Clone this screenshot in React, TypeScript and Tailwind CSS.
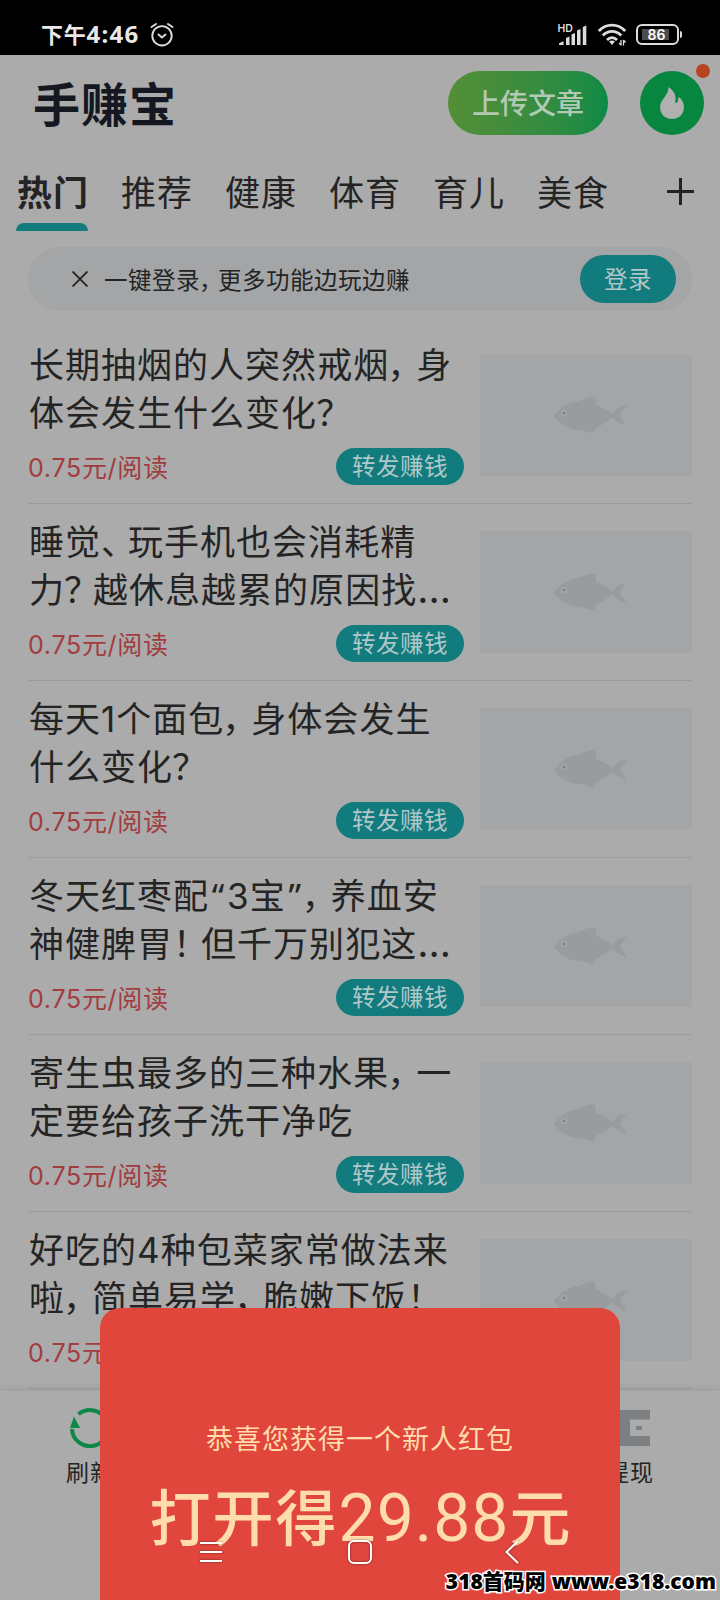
import React from 'react';

const TABS = ['热门', '推荐', '健康', '体育', '育儿', '美食'];

const ARTICLES: string[][] = [
  ['长期抽烟的人突然戒烟，身', '体会发生什么变化？'],
  ['睡觉、玩手机也会消耗精', '力？越休息越累的原因找…'],
  ['每天1个面包，身体会发生', '什么变化？'],
  ['冬天红枣配“3宝”，养血安', '神健脾胃！但千万别犯这…'],
  ['寄生虫最多的三种水果，一', '定要给孩子洗干净吃'],
  ['好吃的4种包菜家常做法来', '啦，简单易学，脆嫩下饭！'],
];

// Punctuation is set narrower than a full em
const PUNCTUATION: Record<string, string> = {
  '，': "inline-block w-[27px] -indent-[2px] [font-feature-settings:'halt']",
  '、': "inline-block w-[27px] [font-feature-settings:'halt']",
  '？': "inline-block w-[28px] -indent-px [font-feature-settings:'halt']",
  '！': "inline-block w-[28px] [font-feature-settings:'halt']",
  '“': "inline-block w-[18px] text-center font-['Noto_Sans'] tracking-normal",
  '”': "inline-block w-[18px] text-center font-['Noto_Sans'] tracking-normal",
  '…': "inline-block w-[36px] text-[39px] leading-none font-['Inter'] tracking-normal",
};

const TitleLine: React.FC<{ text: string }> = ({ text }) => (
  <span className="block h-12 whitespace-nowrap">
    {Array.from(text).map((ch, i) =>
      PUNCTUATION[ch] ? <span key={i} className={PUNCTUATION[ch]}>{ch}</span> : ch
    )}
  </span>
);

const FishIcon: React.FC = () => (
  <svg className="w-[74px] h-[38px]" viewBox="0 0 74 38" fill="#999b9d">
    <path d="M0 20C6 11 15 6 25 5C30 3 35 0 39 0.500C42 1 42 5 42 9C49 11 54 15 58 18.500C61 14 65 10 73 10C69 14 67 17 66 20C68 23 71 27 72 30C66 28 61 25 58 21.500C53 26 48 29 42 32C41 35 40 38 37 37C33 36 30 34 24 34C13 33 5 27 0 20Z" />
    <rect x="8" y="15" width="4" height="4" fill="#808285" stroke="#b0b1b3" strokeWidth="1" />
  </svg>
);

const StatusBar: React.FC = () => (
  <div className="h-[55px] shrink-0 bg-black text-[#e8e8e8] flex items-center pl-[41px] pr-[38px] pt-[14px]">
    <span className="text-[22px] leading-none font-bold tracking-[0.700px] w-[100px] whitespace-nowrap pb-[2px]">下午<span className="font-['Noto_Sans'] text-[24px] tracking-[1.300px]">4:46</span></span>
    <svg className="w-6 h-6 ml-[9px] mt-px" viewBox="0 0 24 24" fill="none" stroke="#dcdcdc" strokeWidth="1.900" strokeLinecap="round">
      <circle cx="12" cy="12.800" r="9.700" />
      <path d="M1.500 4L6 1M18 1L22.500 4M8.500 11.500L12 14.500L15.500 11.500" />
    </svg>
    <div className="ml-auto flex items-center">
      <svg className="w-7 h-[22px] overflow-visible" viewBox="0 0 28 22" fill="#dcdcdc">
        <text x="-1.500" y="8" fontSize="10.500" fontWeight="600" fontFamily="Inter">HD</text>
        <path d="M0 21V19.500L4.500 17V21ZM7 21V14L10.500 12.500V21ZM12.500 21V10.500L16 9V21ZM18 21V6.500L21.500 5V21ZM23.800 21V3L27.300 1.500V21Z" />
      </svg>
      <svg className="w-7 h-[23px] ml-[11px]" viewBox="0 0 28 23" fill="none" stroke="#dcdcdc" strokeWidth="2.900">
        <path d="M0.800 8C8 0.200 20 0.200 27.200 8M4.800 12.500C10 7 18 7 23.200 12.500M9 17C12 14 16 14 19 17" />
        <path d="M11 18.500L14 22L17 18.500Q14 16.500 11 18.500Z" fill="#dcdcdc" stroke="none" />
        <path d="M23 17V22.500M21 20L23 22M25.500 22.500V17M25.500 17L27.500 19.500" strokeWidth="1.300" />
      </svg>
      <div className="ml-[10px] w-[43px] h-[21px] rounded-[6px] border-2 border-[#dcdcdc] p-[3px]">
        <div className="relative w-full h-full flex items-center justify-center">
          <div className="absolute left-[1px] top-0 bottom-0 w-[27px] bg-[#4c4c4c]" />
          <span className="relative right-px text-[14px] leading-none font-semibold text-white font-['Inter']">86</span>
        </div>
      </div>
      <div className="ml-[1px] w-[2px] h-[7px] rounded-r bg-[#dcdcdc]" />
    </div>
  </div>
);

const Header: React.FC = () => (
  <div className="h-[96px] flex items-center pl-[33px] pr-4">
    <h1 className="text-[47px] leading-none font-bold tracking-[1px] text-[#151821] pt-[2px]">手赚宝</h1>
    <button className="ml-auto w-[160px] h-16 rounded-full bg-linear-to-r from-[#538f36] to-[#0a8a46] text-[28px] leading-none font-medium text-[#b3c9b5] pt-px">上传文章</button>
    <div className="relative ml-8 w-16 h-16 rounded-full bg-[#07863f] flex items-center justify-center">
      <svg className="w-6 h-8" viewBox="0 0 24 32" fill="#b0b0b0">
        <path d="M8.500 0C13.500 3.500 16.500 8 15.300 14C15 17 17.500 16.500 17.800 14C18 12.500 18.300 11 19 10C22.500 13 24 16.500 24 20C24 27 19 32 12 32C5 32 0 27 0 20C0 16 2.500 13 5 9.500C7 6.500 8.500 4 8.500 0Z" />
      </svg>
      <span className="absolute top-[-7px] right-[-6px] w-[14px] h-[14px] rounded-full bg-[#b8431f]" />
    </div>
  </div>
);

const TabBar: React.FC = () => (
  <div className="h-20 flex pl-4 text-[35px] tracking-[1px] text-[#242424]">
    {TABS.map((tab, i) => (
      <div key={tab} className="mr-8 w-[72px] flex flex-col">
        <span className={`h-[72px] leading-[84px] pl-px whitespace-nowrap ${i === 0 ? 'font-semibold' : ''}`}>{tab}</span>
        {i === 0 && <span className="h-2 rounded-t-[8px] bg-[#117b7d]" />}
      </div>
    ))}
    <svg className="w-7 h-7 mt-[27px] ml-[27px]" viewBox="0 0 28 28" stroke="#242424" strokeWidth="3">
      <path d="M0 13.500H27M13.500 0V27" />
    </svg>
  </div>
);

const LoginNotice: React.FC = () => (
  <div className="mx-7 mt-4 h-16 rounded-full bg-[#a3a5a7] flex items-center pl-11 pr-4">
    <svg className="w-4 h-4" viewBox="0 0 16 16" stroke="#242424" strokeWidth="1.900">
      <path d="M0.500 0.500L15.500 15.500M15.500 0.500L0.500 15.500" />
    </svg>
    <p className="ml-4 text-[23.500px] leading-none tracking-[0.500px] text-[#242424] whitespace-nowrap pt-[3px]">
      一键登录<span className="inline-block w-[18px] -indent-px [font-feature-settings:'halt']">，</span>更多功能边玩边赚
    </p>
    <button className="ml-auto w-24 h-12 rounded-full bg-[#117b7d] text-[23.500px] leading-none tracking-[0.500px] text-[#b0c8c9] pt-[2px]">登录</button>
  </div>
);

const ArticleRow: React.FC<{ lines: string[] }> = ({ lines }) => (
  <div className="mx-7 h-[177px] border-b border-[#9c9c9c] flex justify-between">
    <div className="w-[436px] pt-[14px]">
      <h2 className="text-[35px] leading-[48px] tracking-[1px] pl-px text-[#242424]">
        {lines.map(line => <TitleLine key={line} text={line} />)}
      </h2>
      <div className="mt-[11px] h-[37px] flex items-center justify-between">
        <span className="text-[25px] leading-none tracking-[0.700px] text-[#a23c3e] pt-[4px]">0.75元/阅读</span>
        <button className="w-32 h-[37px] rounded-full bg-[#117b7d] text-[23.500px] leading-none tracking-[0.500px] text-[#b0c8c9] pt-px">转发赚钱</button>
      </div>
    </div>
    <div className="mt-[27px] w-[212px] h-[122px] bg-[#a3a5a7] flex items-center justify-center pl-[10px]">
      <FishIcon />
    </div>
  </div>
);

const BottomBar: React.FC = () => (
  <div className="absolute inset-x-0 bottom-0 h-[209px] bg-[#ababab] shadow-[0_-2px_8px_rgba(0,0,0,0.08)] flex justify-between text-[23px] leading-none tracking-[1px] text-[#242424]">
    <div className="w-[180px] pt-[17px] flex flex-col items-center">
      <svg className="w-10 h-10" viewBox="0 0 40 40" fill="none" stroke="#0b8746" strokeWidth="4">
        <path d="M8.500 6.300A18 18 0 1 1 2 21" />
        <path d="M4 8.500L0 20H10Z" fill="#0b8746" stroke="none" />
      </svg>
      <span className="mt-[14px]">刷新</span>
    </div>
    <div className="w-[180px] pt-[17px] flex flex-col items-center">
      <svg className="w-10 h-10" viewBox="0 0 40 40" fill="#7c8083">
        <path d="M0 2H40V11.500H20V28H40V38H0Z" />
        <rect x="26" y="18" width="6" height="4" />
      </svg>
      <span className="mt-[14px]">提现</span>
    </div>
  </div>
);

const RedPacket: React.FC = () => (
  <div className="absolute left-[100px] right-[100px] bottom-0 h-[292px] rounded-t-[20px] bg-[#e1463d] text-[#ffdcab] flex flex-col items-center">
    <p className="mt-[118px] text-[27px] leading-[28px] tracking-[1px]">恭喜您获得一个新人红包</p>
    <p className="mt-[33px] text-[61px] leading-[64px] font-medium tracking-[2px] pl-[2px] whitespace-nowrap">打开得<span className="font-['Roboto'] font-normal text-[66px] tracking-[1px]">29.88</span>元</p>
  </div>
);

const SystemNav: React.FC = () => (
  <div className="absolute left-[200px] right-[201px] top-[1540px] flex items-center justify-between drop-shadow-[0_0_1px_rgba(0,0,0,0.5)]">
    <svg className="w-[22px] h-6" viewBox="0 0 22 24" stroke="#fff" strokeWidth="2">
      <path d="M0 3H22M0 12H22M0 21H22" />
    </svg>
    <svg className="w-6 h-6 mr-[7px]" viewBox="0 0 24 24" fill="none" stroke="#fff" strokeWidth="2">
      <rect x="1" y="1" width="22" height="22" rx="5" />
    </svg>
    <svg className="w-[14px] h-6" viewBox="0 0 14 24" fill="none" stroke="#fff" strokeWidth="2">
      <path d="M13 1L1.500 12L13 23" />
    </svg>
  </div>
);

const Watermark: React.FC = () => (
  <div className="absolute right-[4px] bottom-[6px] flex items-center gap-[6px] text-[21px] leading-[26px] font-black text-black whitespace-nowrap [paint-order:stroke_fill] [-webkit-text-stroke:3px_#fff]">
    <span className="font-['Noto_Sans','Noto_Sans_CJK_SC']">318首码网</span>
    <span className="font-['Noto_Sans']">www.e318.com</span>
  </div>
);

const App: React.FC = () => (
  <div className="relative w-[720px] h-[1600px] overflow-hidden bg-[#ababab] font-['Inter','Noto_Sans_CJK_SC',sans-serif]" lang="zh-CN">
    <StatusBar />
    <Header />
    <TabBar />
    <LoginNotice />
    <div className="mt-4">
      {ARTICLES.map(lines => <ArticleRow key={lines[0]} lines={lines} />)}
    </div>
    <BottomBar />
    <RedPacket />
    <SystemNav />
    <Watermark />
  </div>
);

export default App;
